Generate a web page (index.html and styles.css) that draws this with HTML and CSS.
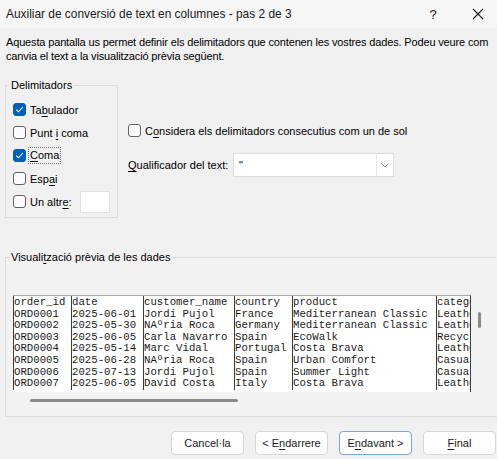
FILE: index.html
```html
<!DOCTYPE html>
<html lang="ca">
<head>
    <meta charset="UTF-8">
    <meta name="viewport" content="width=device-width, initial-scale=1.0">
    <title>Auxiliar de conversió de text en columnes</title>
    <link rel="stylesheet" href="styles.css">
</head>
<body>
    <div class="titlebar">
        <span class="title">Auxiliar de conversió de text en columnes - pas 2 de 3</span>
        <span class="help">?</span>
        <span class="close">
            <svg width="12" height="12" viewBox="0 0 12 12"><path d="M1 1 L11 11 M11 1 L1 11" stroke="#1a1a1a" stroke-width="1.1" fill="none"/></svg>
        </span>
    </div>

    <p class="intro">Aquesta pantalla us permet definir els delimitadors que contenen les vostres dades. Podeu veure com canvia el text a la visualització prèvia següent.</p>

    <div class="options">
        <fieldset class="delims">
            <legend>Delimitadors</legend>
            <div class="row"><span class="check on"></span><span>Ta<u>b</u>ulador</span></div>
            <div class="row"><span class="check"></span><span>Punt <u>i</u> coma</span></div>
            <div class="row"><span class="check on"></span><span class="focus"><u>C</u>oma</span></div>
            <div class="row"><span class="check"></span><span>Esp<u>a</u>i</span></div>
            <div class="row"><span class="check"></span><span class="other-label">Un altr<u>e</u>:</span><span class="textbox"></span></div>
        </fieldset>

        <div class="side">
            <div class="row"><span class="check"></span><span>C<u>o</u>nsidera els delimitadors consecutius com un de sol</span></div>
            <div class="qual">
                <span class="qual-label"><u>Q</u>ualificador del text:</span>
                <div class="combo">
                    <span class="combo-value">"</span>
                    <span class="combo-arrow">
                        <svg width="8" height="5" viewBox="0 0 8 5"><path d="M0.5 0.5 L4 4 L7.5 0.5" stroke="#8a8a8a" stroke-width="1" fill="none"/></svg>
                    </span>
                </div>
            </div>
        </div>
    </div>

    <fieldset class="preview">
        <legend>Visuali<u>t</u>zació prèvia de les dades</legend>
        <div class="preview-body">
            <div class="grid">
                <table>
                    <colgroup>
                        <col class="c1"><col class="c2"><col class="c3"><col class="c4"><col class="c5"><col class="c6">
                    </colgroup>
                    <tr><td>order_id</td><td>date</td><td>customer_name</td><td>country</td><td>product</td><td>category</td></tr>
                    <tr><td>ORD0001</td><td>2025-06-01</td><td>Jordi Pujol</td><td>France</td><td>Mediterranean Classic</td><td>Leather</td></tr>
                    <tr><td>ORD0002</td><td>2025-05-30</td><td>NÃºria Roca</td><td>Germany</td><td>Mediterranean Classic</td><td>Leather</td></tr>
                    <tr><td>ORD0003</td><td>2025-06-05</td><td>Carla Navarro</td><td>Spain</td><td>EcoWalk</td><td>Recycled</td></tr>
                    <tr><td>ORD0004</td><td>2025-05-14</td><td>Marc Vidal</td><td>Portugal</td><td>Costa Brava</td><td>Leather</td></tr>
                    <tr><td>ORD0005</td><td>2025-06-28</td><td>NÃºria Roca</td><td>Spain</td><td>Urban Comfort</td><td>Casual</td></tr>
                    <tr><td>ORD0006</td><td>2025-07-13</td><td>Jordi Pujol</td><td>Spain</td><td>Summer Light</td><td>Casual</td></tr>
                    <tr><td>ORD0007</td><td>2025-06-05</td><td>David Costa</td><td>Italy</td><td>Costa Brava</td><td>Leather</td></tr>
                </table>
            </div>
            <div class="vscroll"><div class="vthumb"></div></div>
        </div>
        <div class="hscroll"><div class="hthumb"></div></div>
    </fieldset>

    <div class="buttons">
        <button class="btn">Cancel·la</button>
        <button class="btn">&lt; E<u>n</u>darrere</button>
        <button class="btn default">E<u>n</u>davant &gt;</button>
        <button class="btn"><u>F</u>inal</button>
    </div>
</body>
</html>
```

FILE: styles.css
```css
body {
    margin: 0;
    font-family: "Liberation Sans", Arial, sans-serif;
    font-size: 11px;
    color: #000;
    background-color: #f0f0f0;
    overflow: hidden;
}
u {
    text-decoration-thickness: 1px;
    text-underline-offset: 2px;
}
.titlebar {
    height: 28px;
    display: flex;
    align-items: center;
    padding-left: 6px;
    background-color: #f5f5f5;
    color: #1a1a1a;
    font-size: 11.9px;
}
.title {
    flex: 1;
}
.help {
    width: 14px;
    margin-right: 32px;
    font-size: 13px;
    text-align: center;
}
.close {
    width: 12px;
    margin-right: 13px;
    display: flex;
}
.intro {
    margin: 7px 0 0 6px;
    line-height: 14px;
    letter-spacing: -0.15px;
}
.options {
    display: flex;
    margin-top: 14px;
    padding-left: 5px;
}
fieldset {
    margin: 0;
    border: 1px solid #dcdcdc;
    padding: 0 7px;
}
legend {
    padding: 0 1px;
    margin-left: -3px;
    line-height: 16px;
}
.delims {
    width: 113px;
    height: 141px;
    box-sizing: border-box;
    padding-top: 5px;
}
.row {
    height: 23px;
    display: flex;
    align-items: center;
    white-space: nowrap;
}
.check {
    width: 13px;
    height: 13px;
    box-sizing: border-box;
    border: 1px solid #636363;
    border-radius: 3px;
    background-color: #fbfbfb;
    margin-right: 4px;
    flex-shrink: 0;
}
.check.on {
    border-color: #005fb8;
    background: #005fb8 url("data:image/svg+xml,%3Csvg xmlns='http://www.w3.org/2000/svg' width='13' height='13'%3E%3Cpath d='M3.2 6.6 L5.4 8.8 L9.8 4.2' stroke='white' stroke-width='1.1' fill='none'/%3E%3C/svg%3E") no-repeat center;
}
.focus {
    outline: 1px dotted #6f6f6f;
    outline-offset: 0;
    padding: 0 1px;
    margin-left: -1px;
    line-height: 15px;
}
.other-label {
    width: 50px;
}
.textbox {
    width: 30px;
    height: 22px;
    box-sizing: border-box;
    border: 1px solid #e0e0e0;
    background-color: #fff;
}
.side {
    margin-left: 10px;
    padding-top: 42px;
}
.qual {
    display: flex;
    align-items: center;
    margin-top: 11px;
    white-space: nowrap;
}
.qual-label {
    width: 105px;
}
.combo {
    width: 161px;
    height: 24px;
    box-sizing: border-box;
    border: 1px solid #dcdcdc;
    background-color: #fff;
    display: flex;
    align-items: center;
}
.combo-value {
    flex: 1;
    padding-left: 5px;
}
.combo-arrow {
    width: 16px;
    height: 22px;
    border-left: 1px solid #e6e6e6;
    display: flex;
    align-items: center;
    justify-content: center;
}
.preview {
    width: 487px;
    height: 168px;
    box-sizing: border-box;
    margin: 31px 0 0 5px;
    background-color: #f2f2f2;
}
.preview-body {
    display: flex;
    margin-top: 30px;
}
.grid {
    width: 458px;
    height: 97px;
    overflow: hidden;
    background-color: #fff;
    border-top: 1px solid #a8a8a8;
    border-right: 1px solid #3c3c3c;
    box-sizing: border-box;
}
table {
    border-collapse: collapse;
    table-layout: fixed;
    width: 600px;
    font-family: "Liberation Mono", "Courier New", monospace;
    font-size: 10.7px;
    color: #1a1a1a;
}
td {
    padding: 0;
    line-height: 11.6px;
    border-left: 1px solid #3c3c3c;
    white-space: nowrap;
    overflow: hidden;
}
tr:first-child td {
    padding-top: 1px;
}
.c1 { width: 58px; }
.c2 { width: 72px; }
.c3 { width: 91px; }
.c4 { width: 58px; }
.c5 { width: 144px; }
.c6 { width: 177px; }
.vscroll {
    width: 20px;
}
.vthumb {
    width: 3px;
    height: 16px;
    margin: 17px 0 0 7px;
    border-radius: 2px;
    background-color: #8a8a8a;
}
.hscroll {
    margin: 7px 0 0 17px;
}
.hthumb {
    width: 208px;
    height: 3px;
    border-radius: 2px;
    background-color: #8a8a8a;
}
.buttons {
    display: flex;
    justify-content: flex-end;
    gap: 11px;
    margin-top: 14px;
    padding-right: 1px;
}
.btn {
    width: 73px;
    height: 24px;
    box-sizing: border-box;
    border: 1px solid #d6d6d6;
    border-radius: 4px;
    background-color: #fdfdfd;
    font-family: "Liberation Sans", Arial, sans-serif;
    font-size: 11px;
    color: #1a1a1a;
    padding: 0;
}
.btn.default {
    border-color: #73a6d9;
}
```
